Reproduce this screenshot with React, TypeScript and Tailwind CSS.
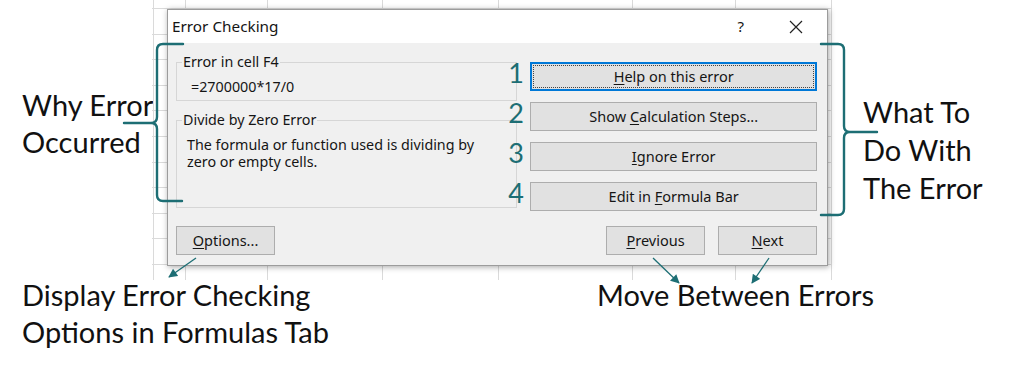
import React from "react";

const TEAL = "#1d6e74";

function GridBackdrop() {
  const cols = [1, 33, 115, 230, 346, 480, 583, 679];
  const rows: number[] = [];
  for (let y = 8; y < 280; y += 25.6) rows.push(Math.round(y) + 0.5);
  return (
    <svg className="absolute inset-0" width="680" height="280" viewBox="0 0 680 280">
      {cols.map((x) => (
        <line key={"c" + x} x1={x + 0.5} y1={0} x2={x + 0.5} y2={280} stroke="#dadada" strokeWidth="1" />
      ))}
      {rows.map((y) => (
        <line key={"r" + y} x1={0} y1={y} x2={680} y2={y} stroke="#dadada" strokeWidth="1" />
      ))}
    </svg>
  );
}

function Btn({
  children,
  focused,
  className = "",
}: {
  children: React.ReactNode;
  focused?: boolean;
  className?: string;
}) {
  return (
    <div
      className={
        "relative flex items-center justify-center h-[29px] bg-[#e1e1e1] text-[14.5px] text-[#151515] " +
        (focused ? "border-2 border-[#0078d7] " : "border border-[#adadad] ") +
        className
      }
    >
      {focused && <span className="absolute inset-[1px] border border-dotted border-[#444]" />}
      <span className="relative">{children}</span>
    </div>
  );
}

function U({ children }: { children: React.ReactNode }) {
  return <span className="underline underline-offset-2">{children}</span>;
}

function Dialog() {
  return (
    <div className="relative flex flex-col w-[661px] h-[257px] border border-[#9c9c9c] bg-[#f0f0f0] shadow-[1px_1px_6px_rgba(0,0,0,0.35)] font-['Noto_Sans',sans-serif] text-[#151515]">
      <div className="flex items-center h-[33px] bg-white pl-[4px] pr-[24px]">
        <span className="text-[15.3px]">Error Checking</span>
        <span className="ml-auto text-[15px] mr-[45px]">?</span>
        <svg width="14" height="14" viewBox="0 0 14 14">
          <path d="M1 1 L13 13 M13 1 L1 13" stroke="#222" strokeWidth="1.2" fill="none" />
        </svg>
      </div>
      <div className="flex flex-col flex-1 pl-[8px] pr-[10px] pt-[11px] pb-[10px]">
        <div className="flex flex-1 gap-[13px]">
          <div className="flex flex-col gap-[11px] w-[342px]">
            <fieldset className="h-[47px] border border-[#d6d6d6]">
              <legend className="ml-[5px] px-[1px] text-[14.3px] leading-[16px]">Error in cell F4</legend>
              <div className="mt-[8px] pl-[14px] text-[14.3px] leading-[17px]">=2700000*17/0</div>
            </fieldset>
            <fieldset className="h-[96px] border border-[#d6d6d6]">
              <legend className="ml-[5px] px-[1px] text-[14.3px] leading-[16px]">Divide by Zero Error</legend>
              <div className="mt-[8px] pl-[10px] pr-[14px] text-[14.3px] leading-[17px]">
                The formula or function used is dividing by zero or empty cells.
              </div>
            </fieldset>
          </div>
          <div className="flex flex-col gap-[11px] w-[287px] pt-[8px]">
            <Btn focused>
              <U>H</U>elp on this error
            </Btn>
            <Btn>
              Show <U>C</U>alculation Steps...
            </Btn>
            <Btn>
              <U>I</U>gnore Error
            </Btn>
            <Btn>
              Edit in <U>F</U>ormula Bar
            </Btn>
          </div>
        </div>
        <div className="flex">
          <Btn className="w-[99px]">
            <U>O</U>ptions...
          </Btn>
          <Btn className="w-[99px] ml-auto">
            <U>P</U>revious
          </Btn>
          <Btn className="w-[99px] ml-[13px]">
            <U>N</U>ext
          </Btn>
        </div>
      </div>
    </div>
  );
}

function Overlay() {
  return (
    <svg className="absolute inset-0 pointer-events-none" width="1024" height="371" viewBox="0 0 1024 371">
      <defs>
        <marker
          id="ah"
          viewBox="0 0 10 10"
          refX="9"
          refY="5"
          markerUnits="userSpaceOnUse"
          markerWidth="10"
          markerHeight="9"
          orient="auto"
        >
          <path d="M0 0 L10 5 L0 10 z" fill={TEAL} />
        </marker>
      </defs>
      <g stroke={TEAL} strokeWidth="2.4" fill="none" strokeLinecap="round" strokeLinejoin="round">
        <path d="M183 44 H163 Q157 44 157 50 V117 Q157 123 151 123 H124 M151 123 Q157 123 157 129 V195 Q157 201 163 201 H182" />
        <path d="M821 44 H838 Q844 44 844 50 V126 Q844 132 850 132 H877 M850 132 Q844 132 844 138 V209 Q844 215 838 215 H821" />
      </g>
      <g stroke={TEAL} strokeWidth="1.3" fill="none">
        <line x1="196" y1="258" x2="169" y2="277" markerEnd="url(#ah)" />
        <line x1="653" y1="258" x2="679" y2="283" markerEnd="url(#ah)" />
        <line x1="769" y1="258" x2="752" y2="283" markerEnd="url(#ah)" />
      </g>
    </svg>
  );
}

export default function App() {
  return (
    <div className="relative flex flex-col w-[1024px] h-[371px] bg-white overflow-hidden font-['Lato',sans-serif] text-[#111]">
      <div className="flex h-[280px] shrink-0">
        <div className="w-[152px] pl-[22px] pt-[86px] text-[29px] leading-[37px] whitespace-nowrap">
          Why Error
          <br />
          Occurred
        </div>
        <div className="relative w-[680px] h-[280px] pl-[15px] pt-[9px]">
          <GridBackdrop />
          <Dialog />
        </div>
        <div className="pl-[31px] pt-[93px] text-[29px] leading-[38px] whitespace-nowrap">
          What To
          <br />
          Do With
          <br />
          The Error
        </div>
      </div>
      <div className="flex -mt-[4px] text-[29px] leading-[37px] whitespace-nowrap">
        <div className="pl-[22px] w-[597px]">
          Display Error Checking
          <br />
          Options in Formulas Tab
        </div>
        <div>Move Between Errors</div>
      </div>
      <div className="absolute left-[500px] top-[53px] w-[24px] flex flex-col text-right text-[27px] leading-[40px] text-[#1d6e74]">
        <span>1</span>
        <span>2</span>
        <span>3</span>
        <span>4</span>
      </div>
      <Overlay />
    </div>
  );
}
